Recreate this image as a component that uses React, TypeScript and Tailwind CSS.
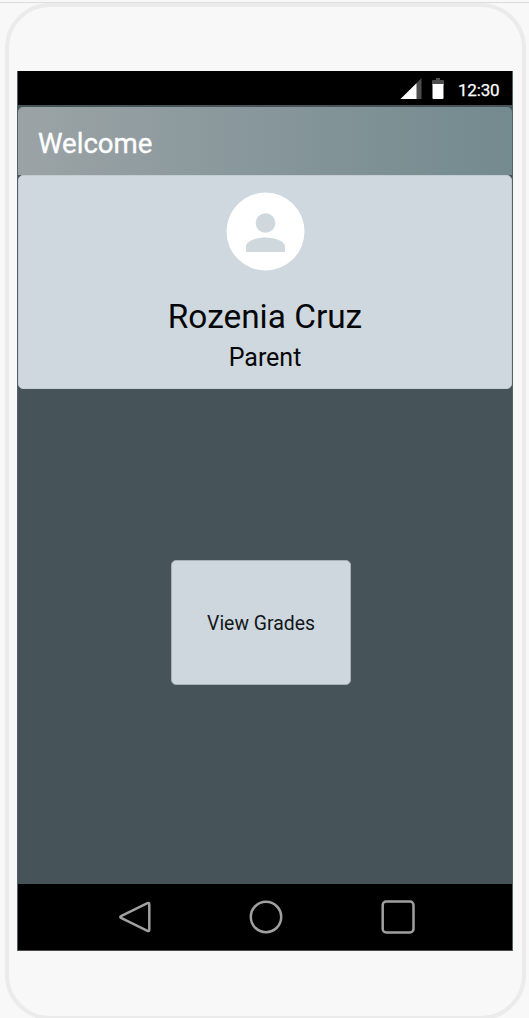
function StatusBar() {
  return (
    <div className="flex h-[34px] shrink-0 items-center justify-end bg-black pr-[13px] text-white">
      <svg className="mt-[2px] h-[22px] w-[22px]" viewBox="0 0 22 22">
        <path d="M21.500 0V21H0.5Z" fill="#4d4d4d" />
        <path d="M16.5 5.2V21H0.5Z" fill="#fff" />
      </svg>
      <svg className="ml-[10px] mt-[2px] h-[22px] w-[12px]" viewBox="0 0 12 22">
        <path d="M4 0h4v2h3q1 0 1 1v4H0V3q0-1 1-1h3Z" fill="#4d4d4d" />
        <path d="M0.5 6h11v14q0 1-1 1h-9q-1 0-1-1Z" fill="#fff" />
      </svg>
      <span className="ml-[14px] mt-[4px] w-[41px] text-[17px] leading-5 tracking-[-0.2px] [-webkit-text-stroke:0.25px_white]">12:30</span>
    </div>
  );
}

function ProfileCard() {
  return (
    <section className="flex h-[214px] shrink-0 flex-col items-center rounded-[5px] border border-[#c3cdd1] bg-[#cfd8de] pt-[16px] text-[#050708]">
      <svg className="h-[79px] w-[79px]" viewBox="0 0 79 79">
        <circle cx="39.5" cy="39.5" r="39" fill="#fff" />
        <circle cx="39.5" cy="31" r="9.8" fill="#cfd8dc" />
        <path d="M20 60V54.5C20 48.5 32 45.500 39.500 45.500S59 48.500 59 54.500V60Z" fill="#cfd8dc" />
      </svg>
      <h2 className="mt-[26px] text-[33.400px] leading-[40px]">Rozenia Cruz</h2>
      <p className="mt-[6px] text-[25px] leading-[30px]">Parent</p>
    </section>
  );
}

function NavigationBar() {
  return (
    <nav className="flex h-[67px] shrink-0 items-center border-b border-[#4a4a4a] bg-black pl-[99px]">
      <svg className="h-9 w-9" viewBox="0 0 36 36" fill="none" stroke="#a0a0a0" strokeWidth="2.5" strokeLinejoin="round">
        <path d="M4.500 16.800L30.500 4.200Q32.300 3.300 32.300 5.500V30.500Q32.300 32.700 30.500 31.800L4.500 19.200Q2 18 4.500 16.800Z" />
      </svg>
      <svg className="ml-[95px] h-9 w-9" viewBox="0 0 36 36" fill="none" stroke="#a0a0a0" strokeWidth="2.5">
        <circle cx="18" cy="18" r="15.200" />
      </svg>
      <svg className="ml-[96px] h-9 w-9" viewBox="0 0 36 36" fill="none" stroke="#a0a0a0" strokeWidth="2.5">
        <rect x="2.700" y="2.500" width="30.800" height="31" rx="3.500" />
      </svg>
    </nav>
  );
}

export default function App() {
  return (
    <div className="h-[1018px] w-[529px] overflow-hidden bg-[#f8f8f8] pt-[2px] font-['Roboto',sans-serif]">
      <div className="h-px bg-[#dcdcdc]" />
      <div className="ml-[5px] h-[1017px] w-[521px] rounded-[45px] border-4 border-[#ebebeb] bg-[#f8f8f8] pt-[64px] pl-[8px]">
        <main className="flex h-[880px] w-[496px] flex-col border-x border-[#536166] bg-[#465358]">
          <StatusBar />
          <header className="mt-[2px] flex h-[68px] shrink-0 items-center rounded-t-[5px] bg-linear-to-r from-[#9ba3a6] to-[#738a8f] pl-[20px]">
            <h1 className="mt-[5px] text-[27.600px] leading-8 text-white [-webkit-text-stroke:0.35px_white]">Welcome</h1>
          </header>
          <ProfileCard />
          <div className="flex flex-1 justify-center pt-[171px] pr-[8px]">
            <button className="h-[125px] w-[180px] rounded-[5px] border border-[#a6b0b6] bg-[#cfd7de] pt-[2px] text-[19.400px] text-[#111619]">
              View Grades
            </button>
          </div>
          <NavigationBar />
        </main>
      </div>
    </div>
  );
}
